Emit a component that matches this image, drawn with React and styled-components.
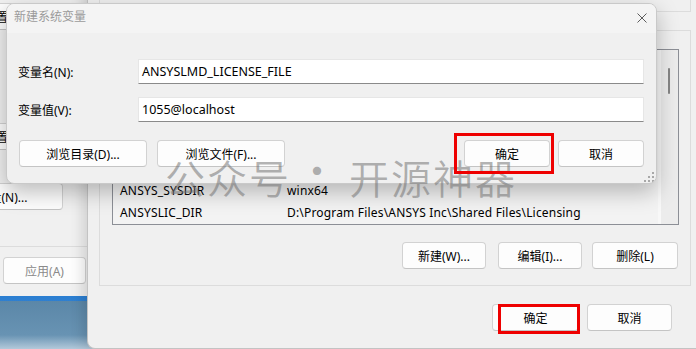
import React from 'react';
import styled, { createGlobalStyle } from 'styled-components';

const GlobalStyle = createGlobalStyle`
  html, body {
    margin: 0;
    padding: 0;
    background: #f0f0f0;
  }
  body {
    font-family: "Noto Sans", "Noto Sans CJK SC", sans-serif;
    font-size: 12px;
    color: #000;
  }
`;

const systemVars = [
  { name: 'ANSYS241_DIR', value: 'D:\\Program Files\\ANSYS Inc\\v241\\ANSYS' },
  { name: 'ANSYSLMD_LICENSE_FILE', value: '1055@localhost' },
  { name: 'ANSYS_SYSDIR', value: 'winx64' },
  { name: 'ANSYSLIC_DIR', value: 'D:\\Program Files\\ANSYS Inc\\Shared Files\\Licensing' },
];

const App = () => (
  <>
    <GlobalStyle />
    <Desktop>
      <LeftWindow>
        <RightColumn>
          <Button $w={110} $h={27}>设置(S)...</Button>
          <Button $w={110} $h={27} $mt={93}>设置(T)...</Button>
          <Button $w={145} $h={27} $mt={33}>环境变量(N)...</Button>
        </RightColumn>
        <Separator />
        <BottomRow $pr={14}>
          <Button $w={83} $h={27}>确定</Button>
          <Button $w={83} $h={27}>取消</Button>
          <Button $w={83} $h={27} $disabled>应用(A)</Button>
        </BottomRow>
      </LeftWindow>

      <EnvWindow>
        <UserGroup />
        <SystemGroup>
          <VarList>
            <Rows>
              {systemVars.map(v => (
                <Row key={v.name}>
                  <NameCell>{v.name}</NameCell>
                  <ValueCell>{v.value}</ValueCell>
                </Row>
              ))}
            </Rows>
            <ScrollTrack>
              <Thumb />
            </ScrollTrack>
          </VarList>
          <ActionRow>
            <Button $w={84} $h={27}>新建(W)...</Button>
            <Button $w={84} $h={27}>编辑(I)...</Button>
            <Button $w={86} $h={27}>删除(L)</Button>
          </ActionRow>
        </SystemGroup>
        <BottomRow $pr={19} $mt={18} $gap={8}>
          <Button $w={87} $h={27}>确定</Button>
          <Button $w={85} $h={27}>取消</Button>
        </BottomRow>
      </EnvWindow>

      <Dialog>
        <TitleBar>
          <Title>新建系统变量</Title>
          <svg width="10" height="10" viewBox="0 0 10 10" style={{ marginTop: 9 }}>
            <path d="M0.5 0.5 L9.5 9.5 M9.5 0.5 L0.5 9.5" stroke="#5c5c5c" strokeWidth="1" fill="none" />
          </svg>
        </TitleBar>
        <DialogBody>
          <FieldRow>
            <Label>变量名(N):</Label>
            <Input>ANSYSLMD_LICENSE_FILE</Input>
          </FieldRow>
          <FieldRow>
            <Label>变量值(V):</Label>
            <Input>1055@localhost</Input>
          </FieldRow>
          <DialogButtons>
            <Button $w={128} $h={27}>浏览目录(D)...</Button>
            <Button $w={128} $h={27}>浏览文件(F)...</Button>
            <Spacer />
            <Button $w={86} $h={27}>确定</Button>
            <Button $w={86} $h={27}>取消</Button>
          </DialogButtons>
        </DialogBody>
        <Grip width="10" height="10" viewBox="0 0 10 10">
          {[[8, 0], [8, 4], [4, 4], [8, 8], [4, 8], [0, 8]].map(([x, y]) => (
            <rect key={`${x}-${y}`} x={x} y={y} width="2" height="2" fill="#a8a8a8" />
          ))}
        </Grip>
      </Dialog>

      <Watermark>
        公众号<Dot>·</Dot>开源神器
      </Watermark>

      <Highlight $x={454} $y={133} $w={100} $h={41} />
      <Highlight $x={498} $y={304} $w={82} $h={30} />
    </Desktop>
  </>
);

export default App;

const Desktop = styled.div`
  position: relative;
  width: 696px;
  height: 349px;
  overflow: hidden;
  background: linear-gradient(
    to bottom,
    #f0f0f0 0,
    #f0f0f0 296px,
    #2a7ed2 296px,
    #2f80d0 301px,
    #5b87a8 301px,
    #6893b3 335px,
    #b3c9da 349px
  );
`;

const LeftWindow = styled.div`
  position: absolute;
  left: -240px;
  top: -10px;
  width: 340px;
  height: 306px;
  box-sizing: border-box;
  padding-top: 13px;
  background: #f0f0f0;
  display: flex;
  flex-direction: column;
`;

const RightColumn = styled.div`
  display: flex;
  flex-direction: column;
  align-items: flex-end;
  padding-right: 37px;
`;

const Separator = styled.div`
  height: 1px;
  margin-top: 36px;
  background: #dcdcdc;
`;

const BottomRow = styled.div`
  display: flex;
  justify-content: flex-end;
  gap: ${p => p.$gap ?? 8}px;
  margin-top: ${p => p.$mt ?? 10}px;
  padding-right: ${p => p.$pr}px;
`;

const Button = styled.div`
  flex: none;
  box-sizing: border-box;
  width: ${p => p.$w}px;
  height: ${p => p.$h}px;
  margin-top: ${p => p.$mt ?? 0}px;
  display: flex;
  align-items: center;
  justify-content: center;
  white-space: nowrap;
  background: #fdfdfd;
  border: 1px solid #d2d2d2;
  border-bottom-color: #c4c4c4;
  border-radius: 4px;
  color: ${p => (p.$disabled ? '#8a8a8a' : '#000')};
  font-size: 12px;
`;

const EnvWindow = styled.div`
  position: absolute;
  left: 87px;
  top: -40px;
  width: 616px;
  height: 389px;
  box-sizing: border-box;
  padding: 10px 12px 0 11px;
  background: #f0f0f0;
  border-left: 1px solid #c3c3c3;
  border-bottom: 1px solid #c3c3c3;
  border-radius: 0 0 0 8px;
  box-shadow: -4px 0 14px rgba(0, 0, 0, 0.14);
  display: flex;
  flex-direction: column;
`;

const UserGroup = styled.div`
  height: 41px;
  border: 1px solid #dcdcdc;
  border-top: none;
`;

const SystemGroup = styled.div`
  margin-top: 18px;
  height: 256px;
  box-sizing: border-box;
  padding: 18px 11px 16px 12px;
  border: 1px solid #dcdcdc;
  display: flex;
  flex-direction: column;
`;

const VarList = styled.div`
  height: 176px;
  box-sizing: border-box;
  border: 1px solid #8c8f96;
  background: #f3f3f3;
  display: flex;
  overflow: hidden;
`;

const Rows = styled.div`
  flex: 1;
  display: flex;
  flex-direction: column;
  justify-content: flex-end;
  padding-bottom: 1px;
  letter-spacing: 0.18px;
`;

const Row = styled.div`
  display: flex;
  height: 22px;
  align-items: center;
  white-space: nowrap;
`;

const NameCell = styled.div`
  width: 174px;
  box-sizing: border-box;
  padding-left: 7px;
`;

const ValueCell = styled.div`
  flex: 1;
`;

const ScrollTrack = styled.div`
  width: 17px;
  position: relative;
  background: #ececec;
  border-left: 3px solid #f8f8f8;
`;

const Thumb = styled.div`
  position: absolute;
  left: 7px;
  top: 18px;
  width: 2px;
  height: 26px;
  border-radius: 1px;
  background: #858585;
`;

const ActionRow = styled.div`
  display: flex;
  justify-content: flex-end;
  gap: 10px;
  margin-top: 17px;
  padding-right: 1px;
  & > div:first-child {
    margin-right: 2px;
  }
`;

const Dialog = styled.div`
  position: absolute;
  left: 6px;
  top: 3px;
  width: 651px;
  height: 181px;
  box-sizing: border-box;
  background: #f0f0f0;
  border: 1px solid #c9c9c9;
  border-radius: 8px;
  overflow: hidden;
  box-shadow: 0 8px 22px rgba(0, 0, 0, 0.26);
`;

const TitleBar = styled.div`
  height: 29px;
  display: flex;
  justify-content: space-between;
  align-items: flex-start;
  padding: 0 9px 0 7px;
  background: #f4f4f4;
`;

const Title = styled.div`
  margin-top: 5px;
  line-height: 16px;
  color: #9b9b9b;
  font-size: 12px;
`;

const DialogBody = styled.div`
  padding: 26px 12px 0 11px;
  display: flex;
  flex-direction: column;
  gap: 13px;
`;

const FieldRow = styled.div`
  display: flex;
  align-items: center;
`;

const Label = styled.div`
  width: 120px;
`;

const Input = styled.div`
  flex: 1;
  height: 25px;
  box-sizing: border-box;
  padding-left: 3px;
  display: flex;
  align-items: center;
  background: #fff;
  border: 1px solid #e6e6e6;
  border-bottom: 1px solid #8a8a8a;
  font-size: 12.5px;
`;

const DialogButtons = styled.div`
  display: flex;
  gap: 10px;
  margin-top: 5px;
  padding-left: 1px;
  & > div:last-child {
    margin-left: -2px;
  }
`;

const Spacer = styled.div`
  flex: 1;
`;

const Grip = styled.svg`
  position: absolute;
  right: 2px;
  bottom: 1px;
`;

const Watermark = styled.div`
  position: absolute;
  left: 165px;
  top: 153px;
  font-family: "Noto Sans CJK SC", sans-serif;
  font-size: 40px;
  font-weight: 350;
  line-height: 48px;
  letter-spacing: 2px;
  white-space: nowrap;
  color: rgba(115, 115, 115, 0.55);
  pointer-events: none;
`;

const Dot = styled.span`
  display: inline-block;
  margin: 0 10px 0 6px;
  transform: translateY(-8px);
`;

const Highlight = styled.div`
  position: absolute;
  left: ${p => p.$x}px;
  top: ${p => p.$y}px;
  width: ${p => p.$w}px;
  height: ${p => p.$h}px;
  box-sizing: border-box;
  border: 3px solid #ee0000;
`;
